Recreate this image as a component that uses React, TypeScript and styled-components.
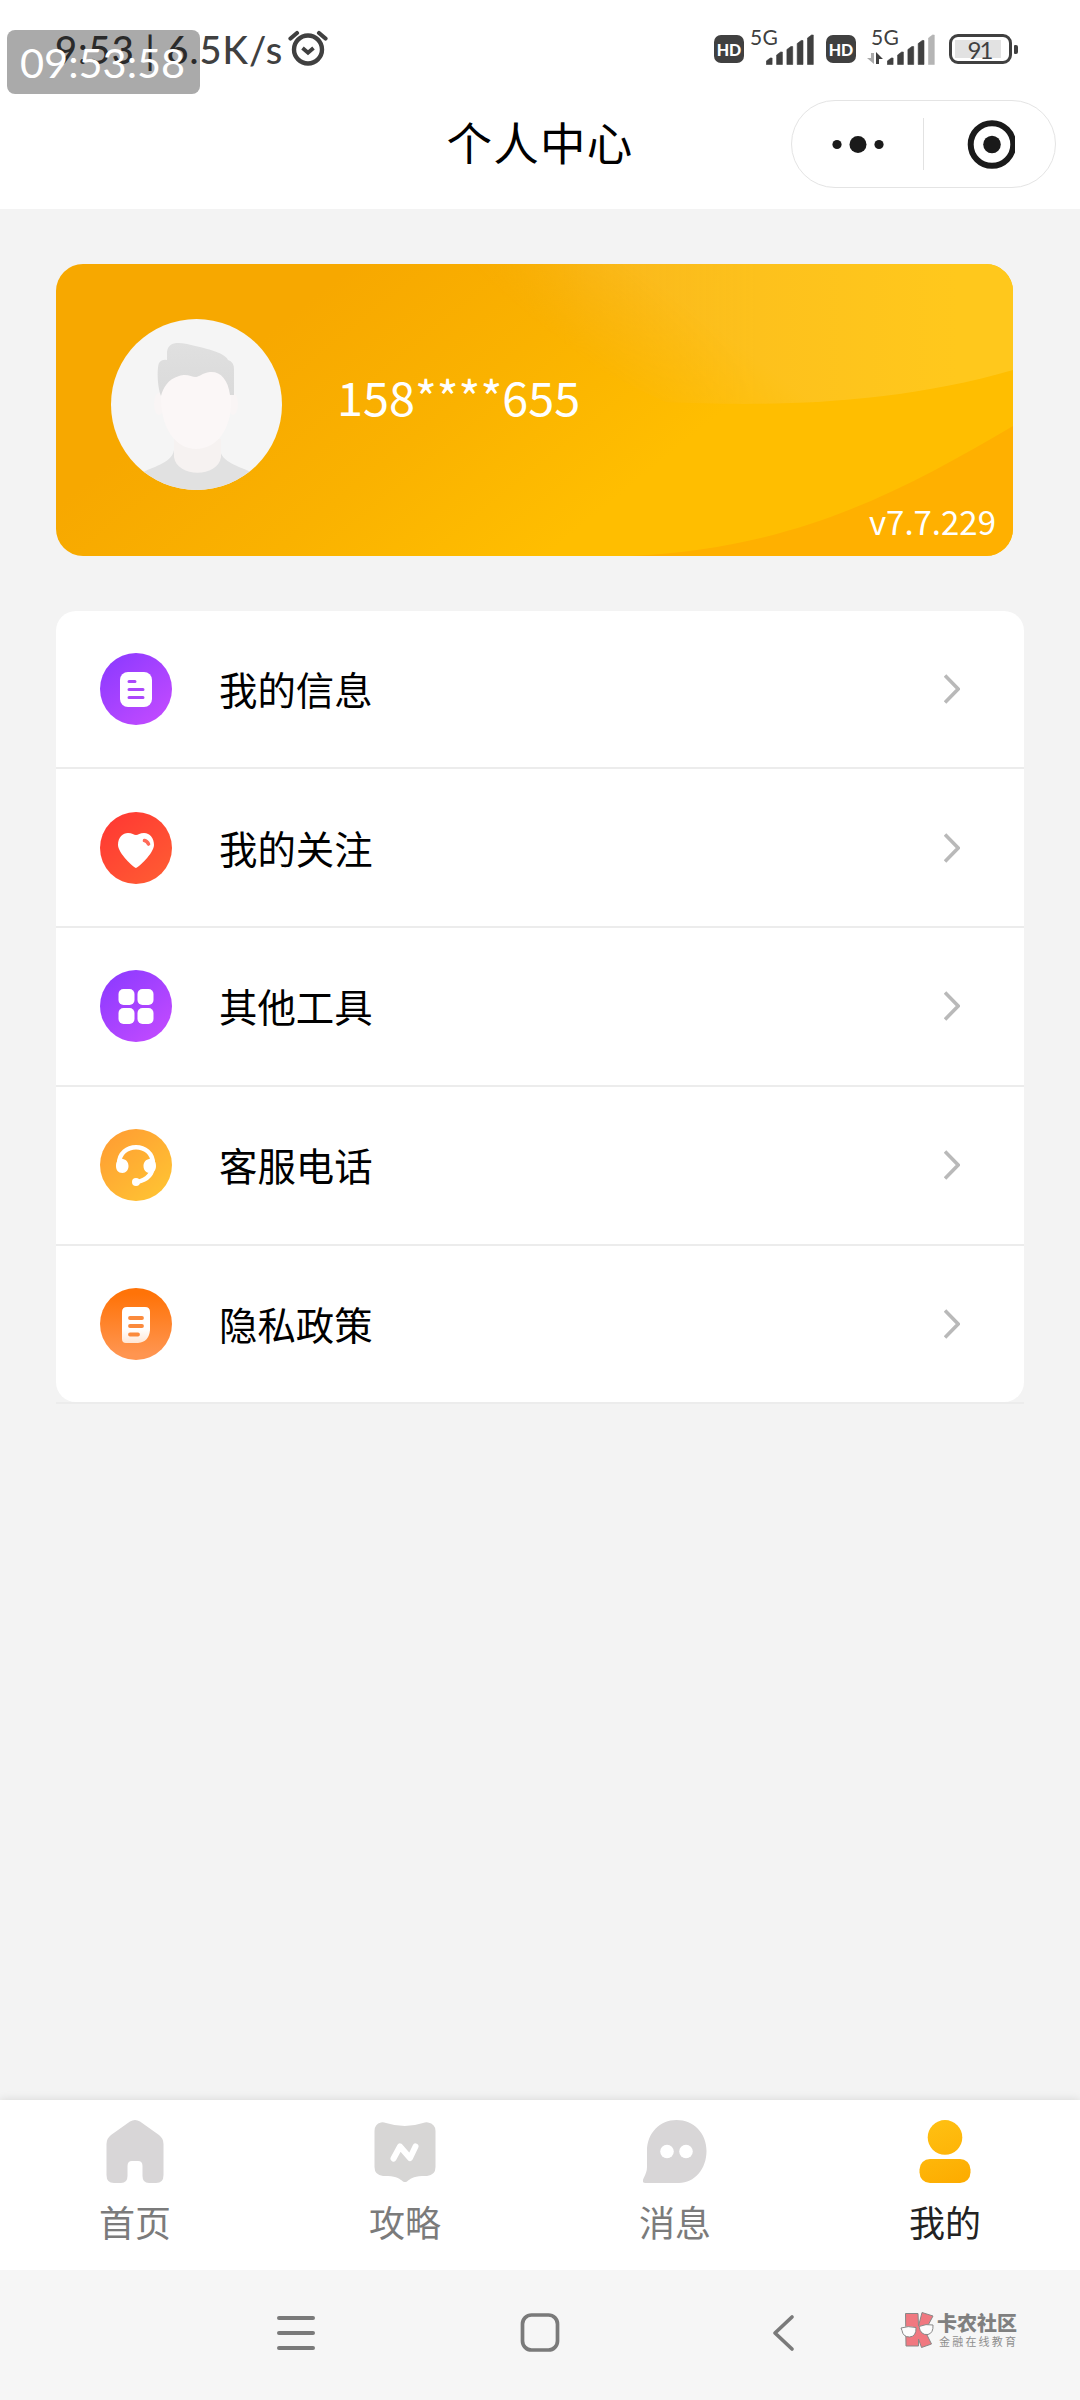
import React from "react";
import styled, { createGlobalStyle } from "styled-components";

const cjk = `"Noto Sans CJK SC", "Noto Sans", sans-serif`;
const latin = `Lato, "Noto Sans", sans-serif`;

const GlobalStyle = createGlobalStyle`
  * { box-sizing: border-box; }
  body { margin: 0; background: #f3f3f3; }
`;

const Screen = styled.div`
  position: relative;
  display: flex;
  flex-direction: column;
  width: 1080px;
  height: 2400px;
  overflow: hidden;
  background: #f3f3f3;
  font-family: ${cjk};
  color: #000;
`;

const Header = styled.header`
  height: 209px;
  flex: none;
  background: #fff;
`;

const StatusBar = styled.div`
  display: flex;
  justify-content: space-between;
  height: 100px;
  padding: 0 62px 0 55px;
  color: #404040;
  font-family: ${latin};
`;

const StatusLeft = styled.div`
  display: flex;
  align-items: flex-start;
  padding-top: 26px;
  font-size: 38px;
  line-height: 46px;
  font-weight: 500;
  letter-spacing: 1px;
  white-space: pre;
`;

const AlarmSvg = styled.svg`
  margin: 3px 0 0 5px;
`;

const StatusRight = styled.div`
  display: flex;
  align-items: flex-start;
  padding-top: 29px;
`;

const HdBadge = styled.span<{ $gap: number }>`
  display: flex;
  align-items: center;
  justify-content: center;
  width: 30px;
  height: 28px;
  margin: 6px ${(p) => p.$gap}px 0 0;
  border-radius: 7px;
  background: #404040;
  color: #fff;
  font-size: 16px;
  font-weight: 900;
`;

const Signal = styled.span<{ $right: number }>`
  display: flex;
  margin-right: ${(p) => p.$right}px;
`;

const NetLabel = styled.span`
  width: 26px;
  margin: -1px -10px 0 -1px;
  font-size: 21px;
  line-height: 18px;
  letter-spacing: 0.2px;
`;

const Battery = styled.span`
  display: flex;
  align-items: center;
  margin-top: 5px;
`;

const BatteryBody = styled.span`
  display: flex;
  width: 63px;
  height: 30px;
  padding: 3px;
  border: 3px solid #404040;
  border-radius: 9px;
`;

const BatteryLevel = styled.span`
  width: 46px;
  height: 18px;
  background: #e2e2e2;
  font-size: 24px;
  line-height: 19px;
  text-align: center;
  letter-spacing: -2px;
  padding-left: 3px;
`;

const BatteryNub = styled.span`
  width: 4px;
  height: 9px;
  margin-left: 2px;
  border-radius: 1px 2px 2px 1px;
  background: #404040;
`;

const TitleBar = styled.div`
  display: grid;
  grid-template-columns: 1fr auto 1fr;
  align-items: center;
  height: 88px;
  padding-right: 24px;
`;

const Title = styled.h1`
  grid-column: 2;
  margin: -6px -24px 0 0;
  font-size: 45.5px;
  line-height: 60px;
  font-weight: 400;
  letter-spacing: 1.3px;
`;

const Capsule = styled.div`
  justify-self: end;
  display: flex;
  align-items: center;
  width: 265px;
  height: 88px;
  border: 1px solid #e4e4e4;
  border-radius: 44px;
`;

const CapsuleHalf = styled.button`
  display: flex;
  flex: 1;
  align-items: center;
  justify-content: center;
  padding: 0;
  border: 0;
  background: none;
`;

const CapsuleLine = styled.span`
  width: 1px;
  height: 52px;
  background: #e2e2e2;
`;

const Content = styled.main`
  flex: 1;
  padding: 55px 56px 0;
`;

const ProfileCard = styled.section`
  display: grid;
  grid-template: 292px / 957px;
  border-radius: 27px;
  overflow: hidden;
  width: 957px;
  color: #fff;

  > * { grid-area: 1 / 1; }
`;

const ProfileInfo = styled.div`
  display: flex;
  align-items: center;
  gap: 55px;
  padding: 0 0 11px 55px;
`;

const Phone = styled.span`
  font-size: 46.8px;
  line-height: 60px;
  margin-bottom: 18px;
`;

const Version = styled.span`
  place-self: end;
  padding: 0 17px 10px 0;
  font-size: 33px;
  line-height: 50px;
`;

const Menu = styled.nav`
  width: 968px;
  height: 791.5px;
  margin-top: 54.5px;
  border-radius: 20px;
  overflow: hidden;
  background: #fff;
`;

const MenuRow = styled.div`
  display: flex;
  align-items: center;
  height: 158.75px;
  padding: 0 64px 2px 44px;

  & + & {
    border-top: 2px solid #ececec;
    margin-top: -2px;
    height: 160.75px;
  }
`;

const MenuFoot = styled.div`
  width: 968px;
  height: 2px;
  background: #ececec;
`;

const MenuLabel = styled.span`
  flex: 1;
  margin-left: 47px;
  font-size: 38.4px;
  line-height: 56px;
  margin-top: -2px;
`;

const TabBar = styled.nav`
  display: grid;
  grid-template-columns: repeat(4, 1fr);
  flex: none;
  height: 170px;
  background: #fff;
  box-shadow: 0 0 9px rgba(0, 0, 0, 0.12);
`;

const Tab = styled.div<{ $active?: boolean }>`
  display: flex;
  flex-direction: column;
  align-items: center;
  padding-top: 18px;
  font-size: 36px;
  line-height: 52px;
  color: ${(p) => (p.$active ? "#222" : "#7b7b7b")};
  svg { margin-right: 1px; }
  span { margin-top: 9px; }
`;

const SystemNav = styled.footer`
  position: relative;
  display: flex;
  flex: none;
  align-items: center;
  justify-content: center;
  gap: 204px;
  height: 130px;
  padding: 0 1px 5px 0;
  background: #f6f6f6;
  z-index: 1;
`;

const Watermark = styled.div`
  position: absolute;
  left: 900px;
  top: 42px;
  display: flex;
  gap: 2px;
`;

const MarkText = styled.div`
  display: flex;
  flex-direction: column;
  white-space: nowrap;
`;

const MarkName = styled.span`
  font-size: 20px;
  line-height: 22px;
  font-weight: 900;
  color: #808080;
`;

const MarkSub = styled.span`
  padding-left: 2px;
  font-size: 11px;
  line-height: 14px;
  letter-spacing: 2.2px;
  color: #8e8e8e;
`;

const ClockOverlay = styled.div`
  position: absolute;
  left: 7px;
  top: 30px;
  width: 193px;
  height: 64px;
  padding-left: 13px;
  border-radius: 8px;
  background: rgba(0, 0, 0, 0.333);
  color: #fff;
  font-family: ${latin};
  font-size: 41.5px;
  line-height: 65px;
`;

const Alarm = () => (
  <AlarmSvg width="40" height="38" viewBox="0 0 40 38" fill="none" stroke="#404040">
    <circle cx="20" cy="20.5" r="14" strokeWidth="4.4" />
    <path d="M14.5 19l5.5 4.8 5.5-4.8" strokeWidth="3.8" />
    <path d="M2.5 9.5L9 4M37.5 9.5L31 4" strokeWidth="4.2" strokeLinecap="round" />
  </AlarmSvg>
);

const bars = [7, 13, 18.5, 24.5, 30];

const SignalBars = ({ weak }: { weak?: boolean }) => (
  <svg width="48" height="37" viewBox="0 0 48 37">
    {bars.map((h, i) => {
      const x = i * 10.3 + 0.3;
      const color = weak && i === 4 ? "#b5b5b5" : "#404040";
      return (
        <path
          key={h}
          d={`M${x} 35.5V${36 - h + 3}l4-3h1.8V35.5z`}
          fill={color}
          stroke={color}
          strokeWidth=".6"
          strokeLinejoin="round"
        />
      );
    })}
  </svg>
);

const ArrowSlot = styled.svg`
  margin: 23px 3px 0 -20px;
`;

const DataArrows = () => (
  <ArrowSlot width="17" height="13" viewBox="0 0 17 13">
    <path d="M7 1v11L0 6h4V1z" fill="#aaa" />
    <path d="M9 12V0l7 7h-4v5z" fill="#404040" />
  </ArrowSlot>
);

const CardArt = () => (
  <svg width="957" height="292" viewBox="0 0 957 292">
    <defs>
      <linearGradient id="base" gradientUnits="userSpaceOnUse" x1="260" y1="30" x2="480" y2="300">
        <stop offset="0" stopColor="#f7a800" />
        <stop offset=".5" stopColor="#fab200" />
        <stop offset="1" stopColor="#ffbe00" />
      </linearGradient>
      <linearGradient id="shineEdge" gradientUnits="userSpaceOnUse" x1="400" y1="0" x2="900" y2="0">
        <stop offset="0" stopColor="#f8b520" stopOpacity="0" />
        <stop offset=".26" stopColor="#f9b81e" stopOpacity=".9" />
        <stop offset=".6" stopColor="#fdc11c" />
        <stop offset="1" stopColor="#ffc81c" />
      </linearGradient>
      <linearGradient id="fade" gradientUnits="userSpaceOnUse" x1="545" y1="108" x2="610" y2="24">
        <stop offset="0" stopColor="#000" />
        <stop offset="1" stopColor="#fff" />
      </linearGradient>
      <mask id="soft">
        <rect width="957" height="292" fill="url(#fade)" />
      </mask>
    </defs>
    <rect width="957" height="292" fill="url(#base)" />
    <path d="M400 0H957V106C830 143 700 142 610 138Q500 90 400 0z" fill="url(#shineEdge)" mask="url(#soft)" />
    <path d="M957 162C850 225 740 285 575 292H957z" fill="#ffb000" />
  </svg>
);

const Avatar = () => (
  <svg width="171" height="171" viewBox="0 0 171 171">
    <defs>
      <clipPath id="round"><circle cx="85.5" cy="85.5" r="85.5" /></clipPath>
      <linearGradient id="hair" x1="0" y1="0" x2="0" y2="1">
        <stop offset="0" stopColor="#e0e0e0" />
        <stop offset="1" stopColor="#dadada" />
      </linearGradient>
    </defs>
    <g clipPath="url(#round)">
      <rect width="171" height="171" fill="#f5f5f5" />
      <path d="M63 131C61 143 45 147 32 153L28 171H145L140 153C127 147 111 143 109 131z" fill="#e1e1e1" />
      <path d="M63 120V138C66 159 107 159 110 138V120z" fill="#f6f2f1" />
      <ellipse cx="48" cy="85" rx="5" ry="11" fill="#f9f5f5" />
      <ellipse cx="122" cy="85" rx="5" ry="11" fill="#f9f5f5" />
      <path d="M50 75C50 45 65 45 85 50C107 44 122 50 120 80C121 111 105 130 85 130C66 130 49 111 50 75z" fill="#fbf7f7" />
      <path d="M50 77C46 66 46 49 48 44Q51 40 56 41V33C57 23 66 23 76 25C92 29 114 33 117 41Q123 43 123 50V76H119C117 60 109 52 99 53C91 54 88 58 85 58C80 58 76 54 68 57C57 60 52 69 50 77z" fill="url(#hair)" />
    </g>
  </svg>
);

type DiscProps = { id: string; from: string; to: string; vertical?: boolean; children: React.ReactNode };

const Disc = ({ id, from, to, vertical, children }: DiscProps) => (
  <svg width="72" height="72" viewBox="0 0 72 72">
    <defs>
      <linearGradient id={id} x1={vertical ? ".5" : ".15"} y1=".08" x2={vertical ? ".5" : ".85"} y2=".92">
        <stop offset="0" stopColor={from} />
        <stop offset="1" stopColor={to} />
      </linearGradient>
    </defs>
    <circle cx="36" cy="36" r="36" fill={`url(#${id})`} />
    {children}
  </svg>
);

const rows = [
  {
    label: "我的信息",
    icon: (
      <Disc id="g1" from="#8f3bff" to="#c04aff">
        <rect x="20" y="19" width="32" height="35" rx="8" fill="#fff" />
        <path d="M29 28.5h6M29 36.5h14M29 44.5h14" stroke="#ab48fb" strokeWidth="3" strokeLinecap="round" />
      </Disc>
    ),
  },
  {
    label: "我的关注",
    icon: (
      <Disc id="g2" from="#ff3a33" to="#ff5a33">
        <path d="M36 56C34 56 18 41 18 33C18 25 23 21 28 21C32 21 34 23 36 23C38 23 40 21 44 21C50 21 54 26 54 33C54 41 38 56 36 56z" fill="#fff" />
        <path d="M44.5 28.5Q47 29 48.5 32" stroke="#ff6a58" strokeWidth="3.6" strokeLinecap="round" fill="none" />
      </Disc>
    ),
  },
  {
    label: "其他工具",
    icon: (
      <Disc id="g3" from="#8f3bff" to="#c04aff">
        <g fill="#fff">
          <rect x="18.5" y="19" width="16" height="16" rx="5" />
          <rect x="37.5" y="19" width="16" height="16" rx="5" />
          <rect x="18.5" y="38" width="16" height="16" rx="5" />
          <rect x="37.5" y="38" width="16" height="16" rx="5" />
        </g>
      </Disc>
    ),
  },
  {
    label: "客服电话",
    icon: (
      <Disc id="g4" from="#ff9f33" to="#ffc233">
        <path d="M19 35C19 12.5 53 12.5 53 35C53 45 47 51 37 53" fill="none" stroke="#fff" strokeWidth="4.5" />
        <path d="M16 37C16 31 20 29 23 30C27 31 28.5 34 28.5 37C28.5 41 26 44 22.5 44C18 44 16 41 16 37zM56 37C56 31 52 29 49 30C45 31 43.5 34 43.5 37C43.5 41 46 44 49.5 44C54 44 56 41 56 37z" fill="#fff" />
        <circle cx="36" cy="53" r="4" fill="#fff" />
      </Disc>
    ),
  },
  {
    label: "隐私政策",
    icon: (
      <Disc id="g5" from="#ff7308" to="#ff9550" vertical>
        <defs>
          <linearGradient id="paper" x1="0" y1="0" x2="0" y2="1">
            <stop offset=".6" stopColor="#fff" />
            <stop offset="1" stopColor="#ffe6d5" />
          </linearGradient>
        </defs>
        <path d="M27 19H45Q50 19 50 24V42Q49 54 38 55H26Q22 55 22 51V24Q22 19 27 19z" fill="url(#paper)" />
        <path d="M30 30h12M30 38h12M30 46.5h8" stroke="#fb8a3c" strokeWidth="3.8" strokeLinecap="round" />
      </Disc>
    ),
  },
];

const Chevron = () => (
  <svg width="16" height="30" viewBox="0 0 16 30">
    <path d="M1 1.5L14.2 15L1 28.5" fill="none" stroke="#b9b9b9" strokeWidth="3.6" />
  </svg>
);

const HomeIcon = () => (
  <svg width="64" height="68" viewBox="0 0 64 68">
    <path d="M27 3.5Q32 .5 37 3.5L56 17Q60.5 20.5 60.5 26V57Q60.5 65 53 65H46Q39.5 65 39.5 58V48Q39.5 43 35 43H29Q24.5 43 24.5 48V58Q24.5 65 18 65H11Q3.5 65 3.5 57V26Q3.5 20.5 8 17z" fill="#d8d6d7" />
  </svg>
);

const GuideIcon = () => (
  <svg width="64" height="68" viewBox="0 0 64 68">
    <path d="M8 4.5Q10 4 13 5Q32 11 50 5Q53 4 55 4.5Q62.5 6 62.5 13V49Q62.5 57 54 58H49C40 58.5 37 61 34 63.5Q32 64.5 30 63.5C27 61 24 58.5 15 58H10Q1.5 57 1.5 49V13Q1.5 6 8 4.5z" fill="#d7d6d5" />
    <path d="M20.5 40.5L27 28.5L37 40L42.5 28.5" stroke="#fff" strokeWidth="6" fill="none" strokeLinecap="round" strokeLinejoin="round" />
  </svg>
);

const MessageIcon = () => (
  <svg width="64" height="68" viewBox="0 0 64 68">
    <path d="M33.5 2C50.5 2 63.5 15 63.5 33C63.5 51 51.5 65 36 65H2.5Q-1.5 65 .5 60.5Q4 54 4 49V33C4 15 17 2 33.5 2z" fill="#d8d6d7" />
    <circle cx="24" cy="33.5" r="6.8" fill="#fff" />
    <circle cx="43" cy="33.5" r="6.8" fill="#fff" />
  </svg>
);

const MineIcon = () => (
  <svg width="64" height="68" viewBox="0 0 64 68">
    <defs>
      <linearGradient id="gold" gradientUnits="userSpaceOnUse" x1="20" y1="2" x2="46" y2="66">
        <stop offset="0" stopColor="#ffc012" />
        <stop offset="1" stopColor="#fdac00" />
      </linearGradient>
    </defs>
    <circle cx="32" cy="19.4" r="17.3" fill="url(#gold)" />
    <rect x="6.5" y="41" width="51" height="24" rx="10.5" fill="url(#gold)" />
  </svg>
);

const BrandMark = () => (
  <svg width="35" height="36" viewBox="0 0 35 36" stroke="#888" strokeWidth="1">
    <path d="M5.5 1.5H18L18.5 14L22 .5L33 4L25 19L31.5 32L21.5 35.5L18.5 27V34H6z" fill="#f07880" />
    <path d="M1 16Q8 13.5 16 15.5Q16.5 24.5 9.5 25Q3 25 2 18.5zM19 14.5Q26 11.5 33 13Q33.5 21 28 22.5Q20.5 23.5 19 14.5z" fill="#fcfcfc" />
  </svg>
);

const tabs = [
  { label: "首页", icon: <HomeIcon /> },
  { label: "攻略", icon: <GuideIcon /> },
  { label: "消息", icon: <MessageIcon /> },
  { label: "我的", icon: <MineIcon />, active: true },
];

export default function App() {
  return (
    <Screen>
      <GlobalStyle />
      <Header>
        <StatusBar>
          <StatusLeft>
            9:53 | 6.5K/s
            <Alarm />
          </StatusLeft>
          <StatusRight>
            <HdBadge $gap={7}>HD</HdBadge>
            <Signal $right={12}>
              <NetLabel>5G</NetLabel>
              <SignalBars />
            </Signal>
            <HdBadge $gap={16}>HD</HdBadge>
            <Signal $right={14}>
              <NetLabel>5G</NetLabel>
              <DataArrows />
              <SignalBars weak />
            </Signal>
            <Battery>
              <BatteryBody>
                <BatteryLevel>91</BatteryLevel>
              </BatteryBody>
              <BatteryNub />
            </Battery>
          </StatusRight>
        </StatusBar>
        <TitleBar>
          <Title>个人中心</Title>
          <Capsule>
            <CapsuleHalf aria-label="更多">
              <svg width="52" height="18" viewBox="0 0 52 18" fill="#1a1a1a">
                <circle cx="5" cy="9.5" r="4.6" />
                <circle cx="26" cy="9.5" r="8.5" />
                <circle cx="47" cy="9.5" r="4.6" />
              </svg>
            </CapsuleHalf>
            <CapsuleLine />
            <CapsuleHalf aria-label="关闭">
              <svg width="50" height="50" viewBox="0 0 50 50">
                <circle cx="27" cy="25.5" r="21.3" fill="none" stroke="#1a1a1a" strokeWidth="6" />
                <circle cx="27" cy="25.5" r="8.8" fill="#1a1a1a" />
              </svg>
            </CapsuleHalf>
          </Capsule>
        </TitleBar>
      </Header>

      <Content>
        <ProfileCard>
          <CardArt />
          <ProfileInfo>
            <Avatar />
            <Phone>158****655</Phone>
          </ProfileInfo>
          <Version>v7.7.229</Version>
        </ProfileCard>

        <Menu>
          {rows.map((row) => (
            <MenuRow key={row.label}>
              {row.icon}
              <MenuLabel>{row.label}</MenuLabel>
              <Chevron />
            </MenuRow>
          ))}
        </Menu>
        <MenuFoot />
      </Content>

      <TabBar>
        {tabs.map((tab) => (
          <Tab key={tab.label} $active={tab.active}>
            {tab.icon}
            <span>{tab.label}</span>
          </Tab>
        ))}
      </TabBar>

      <SystemNav>
        <svg width="40" height="40" viewBox="0 0 40 40">
          <path d="M3 5h34M3 20h34M3 35h34" stroke="#7a7a7a" strokeWidth="4" strokeLinecap="round" />
        </svg>
        <svg width="40" height="40" viewBox="0 0 40 40">
          <rect x="2.5" y="2" width="35" height="35" rx="9" fill="none" stroke="#7a7a7a" strokeWidth="3.7" />
        </svg>
        <svg width="40" height="40" viewBox="0 0 40 40">
          <path d="M28 4L11 20L28 36" fill="none" stroke="#7a7a7a" strokeWidth="3.7" strokeLinecap="round" strokeLinejoin="round" />
        </svg>
        <Watermark>
          <BrandMark />
          <MarkText>
            <MarkName>卡农社区</MarkName>
            <MarkSub>金融在线教育</MarkSub>
          </MarkText>
        </Watermark>
      </SystemNav>

      <ClockOverlay>09:53:58</ClockOverlay>
    </Screen>
  );
}
